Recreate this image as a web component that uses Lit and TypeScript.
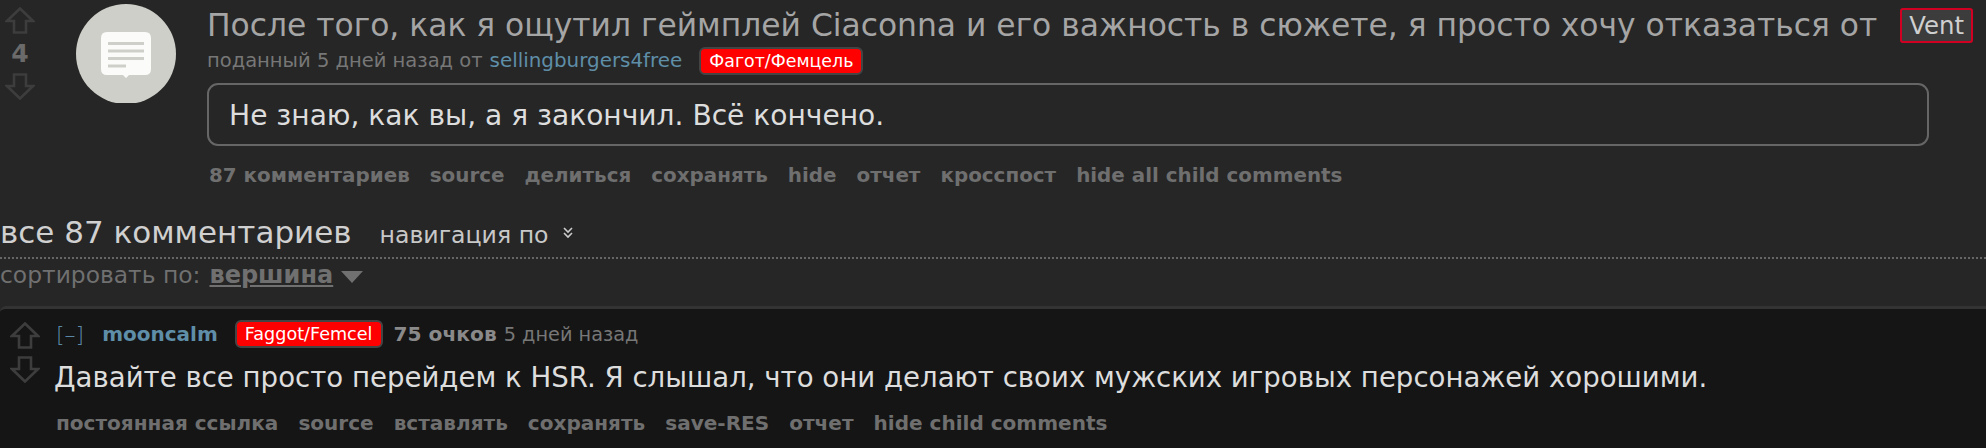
import { LitElement, html, css } from "lit";
import { customElement } from "lit/decorators.js";

const arrow = (down: boolean, color: string) => html`<svg class="arrow" viewBox="0 0 30 27" width="30" height="27">
  <path transform="${down ? "rotate(180 15 13.5)" : ""}" d="M15 1.5 L28 14 L21 14 L21 25.5 L9 25.5 L9 14 L2 14 Z" fill="none" stroke="${color}" stroke-width="2.6"/>
</svg>`;

@customElement("app-root")
export class AppRoot extends LitElement {
  static styles = css`
    :host { display: block; width: 1986px; height: 448px; overflow: hidden; background: #262626; font-family: "DejaVu Sans", Verdana, sans-serif; color: #ccc; }
    .post { display: flex; height: 206px; }
    .votes { width: 40px; padding-top: 7px; display: flex; flex-direction: column; align-items: center; flex: none; height: 100px; }
    .arrow { display: block; flex: none; }
    .score { font-size: 25px; font-weight: bold; color: #6a6a6a; line-height: 30px; margin: 5px 0 4px; }
    .thumb { flex: none; width: 100px; height: 99px; margin: 4px 31px 0 36px; overflow: hidden; }
    .main { flex: 1; min-width: 0; }
    .titlerow { display: flex; align-items: flex-start; height: 47px; }
    .title { font-size: 31.35px; line-height: 40px; color: #a5a5a5; white-space: nowrap; margin-top: 5px; }
    .vent { margin: 8px 0 0 23px; height: 35px; box-sizing: border-box; padding: 0 7px; border: 2px solid #d10023; border-radius: 3px; background: #3c3c3c; color: #cfcfcf; font-size: 24.4px; line-height: 31px; }
    .tagline { font-size: 19.5px; line-height: 24px; color: #777; white-space: nowrap; display: flex; align-items: center; }
    .link { color: #5f8ea8; margin-left: 7px; font-size: 19.9px; }
    .flair { background: #ff0000; color: #fff; border: 2px solid #444; border-radius: 6px; padding: 0 8px; font-size: 17.4px; line-height: 24px; height: 24px; margin-left: 17px; }
    .box { width: 1722px; box-sizing: border-box; height: 63px; margin-top: 8px; border: 2px solid #666; border-radius: 11px; padding: 0 20px; font-size: 28.1px; line-height: 61px; color: #ddd; white-space: nowrap; }
    .buttons { display: flex; gap: 20px; font-weight: bold; font-size: 20.05px; line-height: 24px; color: #6f6f6f; white-space: nowrap; }
    .post .buttons { margin: 18px 0 0 2px; font-size: 19.9px; }
    .heading { display: flex; align-items: baseline; height: 40px; white-space: nowrap; margin-top: 6px; }
    .heading .h { font-size: 31px; line-height: 40px; color: #d0d0d0; }
    .heading .nav { font-size: 23.6px; color: #c8c8c8; margin-left: 28px; }
    .chev { margin-left: 12px; align-self: center; }
    .dots { border-top: 2px dotted #666; margin-top: 5px; height: 0; }
    .sort { font-size: 23.4px; line-height: 28px; color: #707070; white-space: nowrap; display: flex; align-items: center; height: 28px; margin-top: 2px; }
    .sort b { text-decoration: underline; margin-left: 9px; color: #707070; font-size: 24px; }
    .tri { width: 0; height: 0; margin: 4px 0 0 8px; border-left: 11px solid transparent; border-right: 11px solid transparent; border-top: 12px solid #707070; }
    .comment { margin-top: 17px; height: 139px; background: #151515; border-top: 3px solid #333; border-top-left-radius: 6px; display: flex; }
    .cvotes { flex: none; width: 54px; padding: 13px 0 0 10px; box-sizing: border-box; display: flex; flex-direction: column; gap: 7px; }
    .cmain { flex: 1; min-width: 0; }
    .chead { display: flex; align-items: center; height: 28px; margin-top: 11px; font-size: 19.3px; white-space: nowrap; color: #777; }
    .toggle { color: #5a87a5; margin-left: 2px; font-size: 22px; font-weight: 300; }
    .author { color: #5f8ea8; font-weight: bold; font-size: 20px; margin-left: 18px; }
    .chead .flair { margin-left: 17px; padding: 0 8px; font-size: 17.6px; }
    .pts { color: #8a8a8a; font-weight: bold; margin-left: 11px; font-size: 20.2px; }
    .time { margin-left: 7px; }
    .ctext { font-size: 27.6px; line-height: 40px; color: #ddd; white-space: nowrap; margin-top: 10px; }
    .comment .buttons { margin: 13px 0 0 2px; }
  `;

  render() {
    const up = "#3d3d3d";
    return html`
      <div class="post">
        <div class="votes">
          ${arrow(false, up)}
          <div class="score">4</div>
          ${arrow(true, up)}
        </div>
        <div class="thumb">
          <svg viewBox="0 0 100 99" width="100" height="99">
            <circle cx="50" cy="50" r="50" fill="#cfcfca"/>
            <path d="M31 28 H69 Q75 28 75 34 V65 Q75 71 69 71 H53 L50 74 L47 71 H31 Q25 71 25 65 V34 Q25 28 31 28 Z" fill="#fbfbf9"/>
            <g fill="#cfcfca">
              <rect x="32" y="38" width="36" height="3"/><rect x="32" y="45.5" width="36" height="3"/>
              <rect x="32" y="53" width="36" height="3"/><rect x="32" y="60.5" width="18" height="3"/>
            </g>
          </svg>
        </div>
        <div class="main">
          <div class="titlerow">
            <div class="title">После того, как я ощутил геймплей Ciaconna и его важность в сюжете, я просто хочу отказаться от</div>
            <div class="vent">Vent</div>
          </div>
          <div class="tagline">поданный 5 дней назад от<span class="link">sellingburgers4free</span><span class="flair">Фагот/Фемцель</span></div>
          <div class="box">Не знаю, как вы, а я закончил. Всё кончено.</div>
          <div class="buttons">
            <span>87 комментариев</span><span>source</span><span>делиться</span><span>сохранять</span><span>hide</span><span>отчет</span><span>кросспост</span><span>hide all child comments</span>
          </div>
        </div>
      </div>
      <div class="heading">
        <span class="h">все 87 комментариев</span>
        <span class="nav">навигация по</span>
        <svg class="chev" width="14" height="14" viewBox="0 0 14 14" fill="none" stroke="#ccc" stroke-width="1.6"><path d="M3 3 L7 7 L11 3 M3 8 L7 12 L11 8"/></svg>
      </div>
      <div class="dots"></div>
      <div class="sort">сортировать по:<b>вершина</b><span class="tri"></span></div>
      <div class="comment">
        <div class="cvotes">${arrow(false, up)}${arrow(true, up)}</div>
        <div class="cmain">
          <div class="chead">
            <span class="toggle">[–]</span><span class="author">mooncalm</span><span class="flair">Faggot/Femcel</span><span class="pts">75 очков</span><span class="time">5 дней назад</span>
          </div>
          <div class="ctext">Давайте все просто перейдем к HSR. Я слышал, что они делают своих мужских игровых персонажей хорошими.</div>
          <div class="buttons"><span>постоянная ссылка</span><span>source</span><span>вставлять</span><span>сохранять</span><span>save-RES</span><span>отчет</span><span>hide child comments</span></div>
        </div>
      </div>
    `;
  }
}
